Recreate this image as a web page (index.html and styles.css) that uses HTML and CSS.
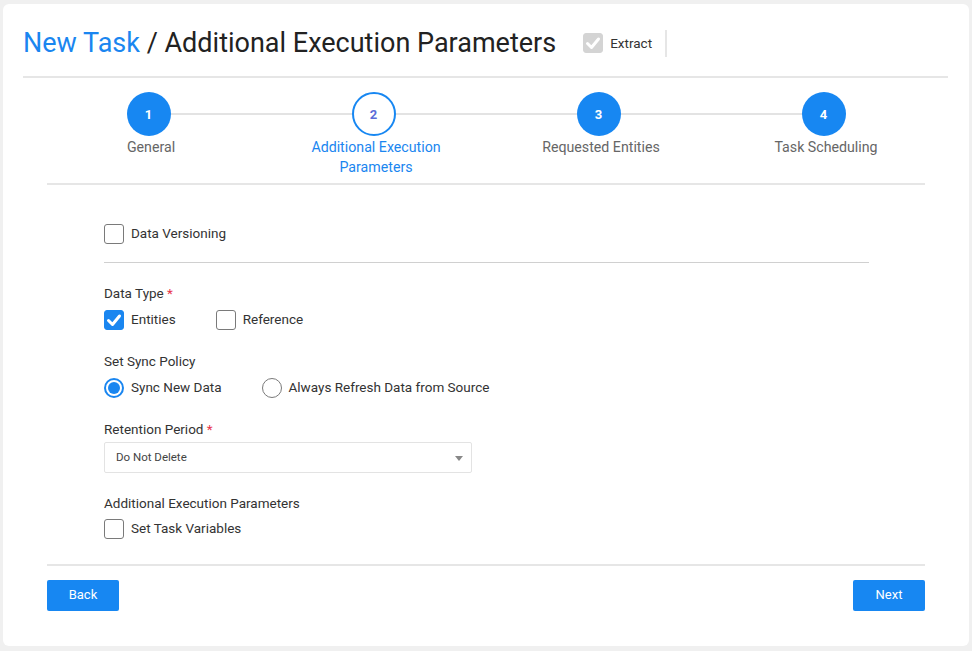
FILE: index.html
```html
<!DOCTYPE html>
<html lang="en">
<head>
<meta charset="utf-8">
<title>New Task / Additional Execution Parameters</title>
<link rel="stylesheet" href="styles.css">
</head>
<body>
<div class="card">
  <header class="head">
    <div class="title-row">
      <h1 class="title"><span class="crumb">New Task</span> / Additional Execution Parameters</h1>
      <label class="extract">
        <span class="cb cb-disabled"><svg viewBox="0 0 20 20" width="20" height="20"><path d="M4.5 10.5 L8.5 14.5 L15.5 6" fill="none" stroke="#fff" stroke-width="3" stroke-linecap="round" stroke-linejoin="round"/></svg></span>
        Extract
      </label>
      <span class="vsep"></span>
    </div>
  </header>

  <div class="body">
    <div class="steps-wrap">
      <ol class="stepper">
        <li class="step done"><span class="dot">1</span><span class="step-label">General</span></li>
        <li class="step current"><span class="dot">2</span><span class="step-label">Additional Execution<br>Parameters</span></li>
        <li class="step done"><span class="dot">3</span><span class="step-label">Requested Entities</span></li>
        <li class="step done"><span class="dot">4</span><span class="step-label">Task Scheduling</span></li>
      </ol>
    </div>

    <form class="form">
      <div class="opt-row">
        <label class="opt"><span class="cb"></span>Data Versioning</label>
      </div>
      <div class="divider"></div>

      <div class="field-label">Data Type <span class="req">*</span></div>
      <div class="opt-row">
        <label class="opt"><span class="cb cb-checked"><svg viewBox="0 0 20 20" width="20" height="20"><path d="M4.5 10.5 L8.5 14.5 L15.5 6" fill="none" stroke="#fff" stroke-width="3" stroke-linecap="round" stroke-linejoin="round"/></svg></span>Entities</label>
        <label class="opt"><span class="cb"></span>Reference</label>
      </div>

      <div class="field-label">Set Sync Policy</div>
      <div class="opt-row">
        <label class="opt"><span class="rb rb-on"></span>Sync New Data</label>
        <label class="opt"><span class="rb"></span>Always Refresh Data from Source</label>
      </div>

      <div class="field-label">Retention Period <span class="req">*</span></div>
      <div class="select"><span>Do Not Delete</span><span class="caret"></span></div>

      <div class="field-label">Additional Execution Parameters</div>
      <div class="opt-row">
        <label class="opt"><span class="cb"></span>Set Task Variables</label>
      </div>
    </form>

    <div class="footer">
      <button class="btn" type="button">Back</button>
      <button class="btn" type="button">Next</button>
    </div>
  </div>
</div>
</body>
</html>
```

FILE: styles.css
```css
* { box-sizing: border-box; }

body {
  margin: 0;
  background: #f0f0f0;
  font-family: Roboto, "Liberation Sans", Arial, sans-serif;
  color: #333;
}

.card {
  margin: 4px 0 0 3px;
  width: 966px;
  height: 642px;
  background: #fff;
  border-radius: 6px;
}

.head {
  padding: 22px 21px 0 20px;
}

.title-row {
  display: flex;
  align-items: center;
  height: 52px;
  padding-bottom: 16px;
  border-bottom: 2px solid #e6e6e6;
}

.title {
  margin: 0;
  font-size: 27px;
  font-weight: 400;
  line-height: 34px;
  color: #222;
}

.crumb { color: #1a86f0; }

.extract {
  display: flex;
  align-items: center;
  gap: 7px;
  margin-left: 27px;
  font-size: 13.5px;
  color: #333;
}

.vsep {
  width: 2px;
  height: 27px;
  margin-left: 13px;
  background: #e6e6e6;
}

/* checkbox & radio */
.cb {
  width: 20px;
  height: 20px;
  flex: none;
  border: 1px solid #7a7a7a;
  border-radius: 3px;
  background: #fff;
  display: inline-flex;
}
.cb svg { display: block; }
.cb-checked {
  border-color: #1a86f0;
  background: #1a86f0;
}
.cb-checked svg, .cb-disabled svg { margin: -1px; }
.cb-disabled {
  border-color: #d4d4d4;
  background: #d4d4d4;
}

.rb {
  width: 20px;
  height: 20px;
  flex: none;
  border: 1px solid #7a7a7a;
  border-radius: 50%;
  background: #fff;
  display: inline-flex;
  align-items: center;
  justify-content: center;
}
.rb-on {
  border: 2px solid #1a86f0;
}
.rb-on::after {
  content: "";
  width: 12px;
  height: 12px;
  border-radius: 50%;
  background: #1a86f0;
}

/* body */
.body {
  padding: 0 44px;
}

.steps-wrap {
  padding-bottom: 6px;
  border-bottom: 2px solid #e6e6e6;
}

.stepper {
  list-style: none;
  margin: 14px -11px 0;
  padding: 0;
  display: grid;
  grid-template-columns: repeat(4, 1fr);
}

.step {
  position: relative;
  display: flex;
  flex-direction: column;
  align-items: center;
  text-align: center;
}

.step + .step::before {
  content: "";
  position: absolute;
  top: 21px;
  left: -50%;
  right: 50%;
  height: 2px;
  background: #e3e3e3;
}

.dot {
  position: relative;
  z-index: 1;
  width: 44px;
  height: 44px;
  border-radius: 50%;
  display: flex;
  align-items: center;
  justify-content: center;
  font-size: 13px;
  font-weight: 700;
  background: #1787f2;
  color: #fff;
}

.current .dot {
  background: #fff;
  border: 2px solid #1787f2;
  color: #5c6cd8;
}

.step-label {
  margin-top: 1px;
  padding-left: 5px;
  font-size: 14.2px;
  line-height: 20px;
  color: #666;
}

.current .step-label { color: #1a86f0; }

/* form */
.form {
  padding: 39px 56px 0 57px;
  font-size: 13.5px;
  color: #333;
}

.opt-row {
  display: flex;
  gap: 40px;
  height: 20px;
}

.opt {
  display: flex;
  align-items: center;
  gap: 7px;
  line-height: 19px;
  padding-bottom: 1px;
}

.divider {
  margin-top: 18px;
  border-top: 1px solid #d0d0d0;
}

.field-label {
  margin-top: 21px;
  line-height: 19px;
  padding-bottom: 1px;
  margin-bottom: 6px;
}
.divider + .field-label { margin-top: 21px; }
.opt-row + .field-label { margin-top: 22px; }
.select + .field-label { margin-top: 21px; margin-bottom: 5px; }

.req { color: #e8334a; }

.select {
  margin-top: -4px;
  width: 368px;
  height: 31px;
  border: 1px solid #e3e3e3;
  border-radius: 2px;
  display: flex;
  align-items: center;
  justify-content: space-between;
  padding: 0 8px 1px 11px;
  font-size: 11.5px;
  color: #444;
}

.caret {
  width: 0;
  height: 0;
  border-left: 4px solid transparent;
  border-right: 4px solid transparent;
  border-top: 5px solid #888;
  margin-top: 3px;
}

.footer {
  margin-top: 25px;
  border-top: 2px solid #e6e6e6;
  padding-top: 14px;
  display: flex;
  justify-content: space-between;
}

.btn {
  width: 72px;
  height: 31px;
  border: 0;
  border-radius: 2px;
  background: #1787f2;
  color: #fff;
  font-family: Roboto, "Liberation Sans", Arial, sans-serif;
  font-size: 13px;
  line-height: 28px;
  padding: 0 0 2px;
}
```
